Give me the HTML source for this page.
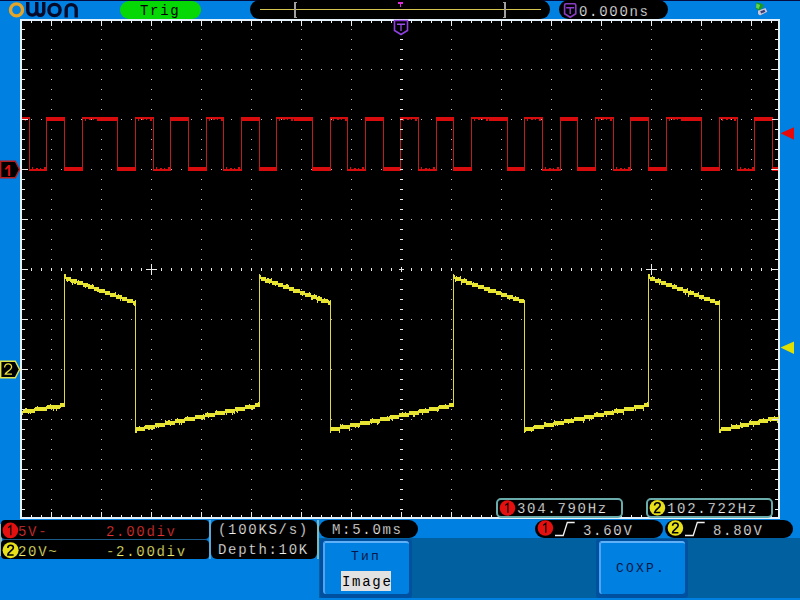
<!DOCTYPE html>
<html><head><meta charset="utf-8"><style>
*{margin:0;padding:0;box-sizing:border-box}
html,body{width:800px;height:600px;overflow:hidden;background:#0080e0;font-family:"Liberation Mono",monospace}
.a{position:absolute}
.pill{position:absolute;background:#000;border-radius:9px}
.txt{position:absolute;font-family:"Liberation Mono",monospace;font-size:14px;letter-spacing:1.7px;line-height:18px;color:#f0f0f0;white-space:pre;-webkit-text-stroke:0.25px #000}
</style></head><body>
<svg class="a" style="left:0;top:0" width="800" height="600" shape-rendering="crispEdges">
<rect x="20" y="19" width="760" height="500" fill="#e4f0fa"/>
<rect x="22" y="21" width="756" height="496" fill="#000"/>
<path d="M51 29h1v1h-1zM51 39h1v1h-1zM51 49h1v1h-1zM51 59h1v1h-1zM51 69h1v1h-1zM51 79h1v1h-1zM51 89h1v1h-1zM51 99h1v1h-1zM51 109h1v1h-1zM51 119h1v1h-1zM51 129h1v1h-1zM51 139h1v1h-1zM51 149h1v1h-1zM51 159h1v1h-1zM51 169h1v1h-1zM51 179h1v1h-1zM51 189h1v1h-1zM51 199h1v1h-1zM51 209h1v1h-1zM51 219h1v1h-1zM51 229h1v1h-1zM51 239h1v1h-1zM51 249h1v1h-1zM51 259h1v1h-1zM51 269h1v1h-1zM51 279h1v1h-1zM51 289h1v1h-1zM51 299h1v1h-1zM51 309h1v1h-1zM51 319h1v1h-1zM51 329h1v1h-1zM51 339h1v1h-1zM51 349h1v1h-1zM51 359h1v1h-1zM51 369h1v1h-1zM51 379h1v1h-1zM51 389h1v1h-1zM51 399h1v1h-1zM51 409h1v1h-1zM51 419h1v1h-1zM51 429h1v1h-1zM51 439h1v1h-1zM51 449h1v1h-1zM51 459h1v1h-1zM51 469h1v1h-1zM51 479h1v1h-1zM51 489h1v1h-1zM51 499h1v1h-1zM51 509h1v1h-1zM101 29h1v1h-1zM101 39h1v1h-1zM101 49h1v1h-1zM101 59h1v1h-1zM101 69h1v1h-1zM101 79h1v1h-1zM101 89h1v1h-1zM101 99h1v1h-1zM101 109h1v1h-1zM101 119h1v1h-1zM101 129h1v1h-1zM101 139h1v1h-1zM101 149h1v1h-1zM101 159h1v1h-1zM101 169h1v1h-1zM101 179h1v1h-1zM101 189h1v1h-1zM101 199h1v1h-1zM101 209h1v1h-1zM101 219h1v1h-1zM101 229h1v1h-1zM101 239h1v1h-1zM101 249h1v1h-1zM101 259h1v1h-1zM101 269h1v1h-1zM101 279h1v1h-1zM101 289h1v1h-1zM101 299h1v1h-1zM101 309h1v1h-1zM101 319h1v1h-1zM101 329h1v1h-1zM101 339h1v1h-1zM101 349h1v1h-1zM101 359h1v1h-1zM101 369h1v1h-1zM101 379h1v1h-1zM101 389h1v1h-1zM101 399h1v1h-1zM101 409h1v1h-1zM101 419h1v1h-1zM101 429h1v1h-1zM101 439h1v1h-1zM101 449h1v1h-1zM101 459h1v1h-1zM101 469h1v1h-1zM101 479h1v1h-1zM101 489h1v1h-1zM101 499h1v1h-1zM101 509h1v1h-1zM151 29h1v1h-1zM151 39h1v1h-1zM151 49h1v1h-1zM151 59h1v1h-1zM151 69h1v1h-1zM151 79h1v1h-1zM151 89h1v1h-1zM151 99h1v1h-1zM151 109h1v1h-1zM151 119h1v1h-1zM151 129h1v1h-1zM151 139h1v1h-1zM151 149h1v1h-1zM151 159h1v1h-1zM151 169h1v1h-1zM151 179h1v1h-1zM151 189h1v1h-1zM151 199h1v1h-1zM151 209h1v1h-1zM151 219h1v1h-1zM151 229h1v1h-1zM151 239h1v1h-1zM151 249h1v1h-1zM151 259h1v1h-1zM151 269h1v1h-1zM151 279h1v1h-1zM151 289h1v1h-1zM151 299h1v1h-1zM151 309h1v1h-1zM151 319h1v1h-1zM151 329h1v1h-1zM151 339h1v1h-1zM151 349h1v1h-1zM151 359h1v1h-1zM151 369h1v1h-1zM151 379h1v1h-1zM151 389h1v1h-1zM151 399h1v1h-1zM151 409h1v1h-1zM151 419h1v1h-1zM151 429h1v1h-1zM151 439h1v1h-1zM151 449h1v1h-1zM151 459h1v1h-1zM151 469h1v1h-1zM151 479h1v1h-1zM151 489h1v1h-1zM151 499h1v1h-1zM151 509h1v1h-1zM201 29h1v1h-1zM201 39h1v1h-1zM201 49h1v1h-1zM201 59h1v1h-1zM201 69h1v1h-1zM201 79h1v1h-1zM201 89h1v1h-1zM201 99h1v1h-1zM201 109h1v1h-1zM201 119h1v1h-1zM201 129h1v1h-1zM201 139h1v1h-1zM201 149h1v1h-1zM201 159h1v1h-1zM201 169h1v1h-1zM201 179h1v1h-1zM201 189h1v1h-1zM201 199h1v1h-1zM201 209h1v1h-1zM201 219h1v1h-1zM201 229h1v1h-1zM201 239h1v1h-1zM201 249h1v1h-1zM201 259h1v1h-1zM201 269h1v1h-1zM201 279h1v1h-1zM201 289h1v1h-1zM201 299h1v1h-1zM201 309h1v1h-1zM201 319h1v1h-1zM201 329h1v1h-1zM201 339h1v1h-1zM201 349h1v1h-1zM201 359h1v1h-1zM201 369h1v1h-1zM201 379h1v1h-1zM201 389h1v1h-1zM201 399h1v1h-1zM201 409h1v1h-1zM201 419h1v1h-1zM201 429h1v1h-1zM201 439h1v1h-1zM201 449h1v1h-1zM201 459h1v1h-1zM201 469h1v1h-1zM201 479h1v1h-1zM201 489h1v1h-1zM201 499h1v1h-1zM201 509h1v1h-1zM251 29h1v1h-1zM251 39h1v1h-1zM251 49h1v1h-1zM251 59h1v1h-1zM251 69h1v1h-1zM251 79h1v1h-1zM251 89h1v1h-1zM251 99h1v1h-1zM251 109h1v1h-1zM251 119h1v1h-1zM251 129h1v1h-1zM251 139h1v1h-1zM251 149h1v1h-1zM251 159h1v1h-1zM251 169h1v1h-1zM251 179h1v1h-1zM251 189h1v1h-1zM251 199h1v1h-1zM251 209h1v1h-1zM251 219h1v1h-1zM251 229h1v1h-1zM251 239h1v1h-1zM251 249h1v1h-1zM251 259h1v1h-1zM251 269h1v1h-1zM251 279h1v1h-1zM251 289h1v1h-1zM251 299h1v1h-1zM251 309h1v1h-1zM251 319h1v1h-1zM251 329h1v1h-1zM251 339h1v1h-1zM251 349h1v1h-1zM251 359h1v1h-1zM251 369h1v1h-1zM251 379h1v1h-1zM251 389h1v1h-1zM251 399h1v1h-1zM251 409h1v1h-1zM251 419h1v1h-1zM251 429h1v1h-1zM251 439h1v1h-1zM251 449h1v1h-1zM251 459h1v1h-1zM251 469h1v1h-1zM251 479h1v1h-1zM251 489h1v1h-1zM251 499h1v1h-1zM251 509h1v1h-1zM301 29h1v1h-1zM301 39h1v1h-1zM301 49h1v1h-1zM301 59h1v1h-1zM301 69h1v1h-1zM301 79h1v1h-1zM301 89h1v1h-1zM301 99h1v1h-1zM301 109h1v1h-1zM301 119h1v1h-1zM301 129h1v1h-1zM301 139h1v1h-1zM301 149h1v1h-1zM301 159h1v1h-1zM301 169h1v1h-1zM301 179h1v1h-1zM301 189h1v1h-1zM301 199h1v1h-1zM301 209h1v1h-1zM301 219h1v1h-1zM301 229h1v1h-1zM301 239h1v1h-1zM301 249h1v1h-1zM301 259h1v1h-1zM301 269h1v1h-1zM301 279h1v1h-1zM301 289h1v1h-1zM301 299h1v1h-1zM301 309h1v1h-1zM301 319h1v1h-1zM301 329h1v1h-1zM301 339h1v1h-1zM301 349h1v1h-1zM301 359h1v1h-1zM301 369h1v1h-1zM301 379h1v1h-1zM301 389h1v1h-1zM301 399h1v1h-1zM301 409h1v1h-1zM301 419h1v1h-1zM301 429h1v1h-1zM301 439h1v1h-1zM301 449h1v1h-1zM301 459h1v1h-1zM301 469h1v1h-1zM301 479h1v1h-1zM301 489h1v1h-1zM301 499h1v1h-1zM301 509h1v1h-1zM351 29h1v1h-1zM351 39h1v1h-1zM351 49h1v1h-1zM351 59h1v1h-1zM351 69h1v1h-1zM351 79h1v1h-1zM351 89h1v1h-1zM351 99h1v1h-1zM351 109h1v1h-1zM351 119h1v1h-1zM351 129h1v1h-1zM351 139h1v1h-1zM351 149h1v1h-1zM351 159h1v1h-1zM351 169h1v1h-1zM351 179h1v1h-1zM351 189h1v1h-1zM351 199h1v1h-1zM351 209h1v1h-1zM351 219h1v1h-1zM351 229h1v1h-1zM351 239h1v1h-1zM351 249h1v1h-1zM351 259h1v1h-1zM351 269h1v1h-1zM351 279h1v1h-1zM351 289h1v1h-1zM351 299h1v1h-1zM351 309h1v1h-1zM351 319h1v1h-1zM351 329h1v1h-1zM351 339h1v1h-1zM351 349h1v1h-1zM351 359h1v1h-1zM351 369h1v1h-1zM351 379h1v1h-1zM351 389h1v1h-1zM351 399h1v1h-1zM351 409h1v1h-1zM351 419h1v1h-1zM351 429h1v1h-1zM351 439h1v1h-1zM351 449h1v1h-1zM351 459h1v1h-1zM351 469h1v1h-1zM351 479h1v1h-1zM351 489h1v1h-1zM351 499h1v1h-1zM351 509h1v1h-1zM451 29h1v1h-1zM451 39h1v1h-1zM451 49h1v1h-1zM451 59h1v1h-1zM451 69h1v1h-1zM451 79h1v1h-1zM451 89h1v1h-1zM451 99h1v1h-1zM451 109h1v1h-1zM451 119h1v1h-1zM451 129h1v1h-1zM451 139h1v1h-1zM451 149h1v1h-1zM451 159h1v1h-1zM451 169h1v1h-1zM451 179h1v1h-1zM451 189h1v1h-1zM451 199h1v1h-1zM451 209h1v1h-1zM451 219h1v1h-1zM451 229h1v1h-1zM451 239h1v1h-1zM451 249h1v1h-1zM451 259h1v1h-1zM451 269h1v1h-1zM451 279h1v1h-1zM451 289h1v1h-1zM451 299h1v1h-1zM451 309h1v1h-1zM451 319h1v1h-1zM451 329h1v1h-1zM451 339h1v1h-1zM451 349h1v1h-1zM451 359h1v1h-1zM451 369h1v1h-1zM451 379h1v1h-1zM451 389h1v1h-1zM451 399h1v1h-1zM451 409h1v1h-1zM451 419h1v1h-1zM451 429h1v1h-1zM451 439h1v1h-1zM451 449h1v1h-1zM451 459h1v1h-1zM451 469h1v1h-1zM451 479h1v1h-1zM451 489h1v1h-1zM451 499h1v1h-1zM451 509h1v1h-1zM501 29h1v1h-1zM501 39h1v1h-1zM501 49h1v1h-1zM501 59h1v1h-1zM501 69h1v1h-1zM501 79h1v1h-1zM501 89h1v1h-1zM501 99h1v1h-1zM501 109h1v1h-1zM501 119h1v1h-1zM501 129h1v1h-1zM501 139h1v1h-1zM501 149h1v1h-1zM501 159h1v1h-1zM501 169h1v1h-1zM501 179h1v1h-1zM501 189h1v1h-1zM501 199h1v1h-1zM501 209h1v1h-1zM501 219h1v1h-1zM501 229h1v1h-1zM501 239h1v1h-1zM501 249h1v1h-1zM501 259h1v1h-1zM501 269h1v1h-1zM501 279h1v1h-1zM501 289h1v1h-1zM501 299h1v1h-1zM501 309h1v1h-1zM501 319h1v1h-1zM501 329h1v1h-1zM501 339h1v1h-1zM501 349h1v1h-1zM501 359h1v1h-1zM501 369h1v1h-1zM501 379h1v1h-1zM501 389h1v1h-1zM501 399h1v1h-1zM501 409h1v1h-1zM501 419h1v1h-1zM501 429h1v1h-1zM501 439h1v1h-1zM501 449h1v1h-1zM501 459h1v1h-1zM501 469h1v1h-1zM501 479h1v1h-1zM501 489h1v1h-1zM501 499h1v1h-1zM501 509h1v1h-1zM551 29h1v1h-1zM551 39h1v1h-1zM551 49h1v1h-1zM551 59h1v1h-1zM551 69h1v1h-1zM551 79h1v1h-1zM551 89h1v1h-1zM551 99h1v1h-1zM551 109h1v1h-1zM551 119h1v1h-1zM551 129h1v1h-1zM551 139h1v1h-1zM551 149h1v1h-1zM551 159h1v1h-1zM551 169h1v1h-1zM551 179h1v1h-1zM551 189h1v1h-1zM551 199h1v1h-1zM551 209h1v1h-1zM551 219h1v1h-1zM551 229h1v1h-1zM551 239h1v1h-1zM551 249h1v1h-1zM551 259h1v1h-1zM551 269h1v1h-1zM551 279h1v1h-1zM551 289h1v1h-1zM551 299h1v1h-1zM551 309h1v1h-1zM551 319h1v1h-1zM551 329h1v1h-1zM551 339h1v1h-1zM551 349h1v1h-1zM551 359h1v1h-1zM551 369h1v1h-1zM551 379h1v1h-1zM551 389h1v1h-1zM551 399h1v1h-1zM551 409h1v1h-1zM551 419h1v1h-1zM551 429h1v1h-1zM551 439h1v1h-1zM551 449h1v1h-1zM551 459h1v1h-1zM551 469h1v1h-1zM551 479h1v1h-1zM551 489h1v1h-1zM551 499h1v1h-1zM551 509h1v1h-1zM601 29h1v1h-1zM601 39h1v1h-1zM601 49h1v1h-1zM601 59h1v1h-1zM601 69h1v1h-1zM601 79h1v1h-1zM601 89h1v1h-1zM601 99h1v1h-1zM601 109h1v1h-1zM601 119h1v1h-1zM601 129h1v1h-1zM601 139h1v1h-1zM601 149h1v1h-1zM601 159h1v1h-1zM601 169h1v1h-1zM601 179h1v1h-1zM601 189h1v1h-1zM601 199h1v1h-1zM601 209h1v1h-1zM601 219h1v1h-1zM601 229h1v1h-1zM601 239h1v1h-1zM601 249h1v1h-1zM601 259h1v1h-1zM601 269h1v1h-1zM601 279h1v1h-1zM601 289h1v1h-1zM601 299h1v1h-1zM601 309h1v1h-1zM601 319h1v1h-1zM601 329h1v1h-1zM601 339h1v1h-1zM601 349h1v1h-1zM601 359h1v1h-1zM601 369h1v1h-1zM601 379h1v1h-1zM601 389h1v1h-1zM601 399h1v1h-1zM601 409h1v1h-1zM601 419h1v1h-1zM601 429h1v1h-1zM601 439h1v1h-1zM601 449h1v1h-1zM601 459h1v1h-1zM601 469h1v1h-1zM601 479h1v1h-1zM601 489h1v1h-1zM601 499h1v1h-1zM601 509h1v1h-1zM651 29h1v1h-1zM651 39h1v1h-1zM651 49h1v1h-1zM651 59h1v1h-1zM651 69h1v1h-1zM651 79h1v1h-1zM651 89h1v1h-1zM651 99h1v1h-1zM651 109h1v1h-1zM651 119h1v1h-1zM651 129h1v1h-1zM651 139h1v1h-1zM651 149h1v1h-1zM651 159h1v1h-1zM651 169h1v1h-1zM651 179h1v1h-1zM651 189h1v1h-1zM651 199h1v1h-1zM651 209h1v1h-1zM651 219h1v1h-1zM651 229h1v1h-1zM651 239h1v1h-1zM651 249h1v1h-1zM651 259h1v1h-1zM651 269h1v1h-1zM651 279h1v1h-1zM651 289h1v1h-1zM651 299h1v1h-1zM651 309h1v1h-1zM651 319h1v1h-1zM651 329h1v1h-1zM651 339h1v1h-1zM651 349h1v1h-1zM651 359h1v1h-1zM651 369h1v1h-1zM651 379h1v1h-1zM651 389h1v1h-1zM651 399h1v1h-1zM651 409h1v1h-1zM651 419h1v1h-1zM651 429h1v1h-1zM651 439h1v1h-1zM651 449h1v1h-1zM651 459h1v1h-1zM651 469h1v1h-1zM651 479h1v1h-1zM651 489h1v1h-1zM651 499h1v1h-1zM651 509h1v1h-1zM701 29h1v1h-1zM701 39h1v1h-1zM701 49h1v1h-1zM701 59h1v1h-1zM701 69h1v1h-1zM701 79h1v1h-1zM701 89h1v1h-1zM701 99h1v1h-1zM701 109h1v1h-1zM701 119h1v1h-1zM701 129h1v1h-1zM701 139h1v1h-1zM701 149h1v1h-1zM701 159h1v1h-1zM701 169h1v1h-1zM701 179h1v1h-1zM701 189h1v1h-1zM701 199h1v1h-1zM701 209h1v1h-1zM701 219h1v1h-1zM701 229h1v1h-1zM701 239h1v1h-1zM701 249h1v1h-1zM701 259h1v1h-1zM701 269h1v1h-1zM701 279h1v1h-1zM701 289h1v1h-1zM701 299h1v1h-1zM701 309h1v1h-1zM701 319h1v1h-1zM701 329h1v1h-1zM701 339h1v1h-1zM701 349h1v1h-1zM701 359h1v1h-1zM701 369h1v1h-1zM701 379h1v1h-1zM701 389h1v1h-1zM701 399h1v1h-1zM701 409h1v1h-1zM701 419h1v1h-1zM701 429h1v1h-1zM701 439h1v1h-1zM701 449h1v1h-1zM701 459h1v1h-1zM701 469h1v1h-1zM701 479h1v1h-1zM701 489h1v1h-1zM701 499h1v1h-1zM701 509h1v1h-1zM751 29h1v1h-1zM751 39h1v1h-1zM751 49h1v1h-1zM751 59h1v1h-1zM751 69h1v1h-1zM751 79h1v1h-1zM751 89h1v1h-1zM751 99h1v1h-1zM751 109h1v1h-1zM751 119h1v1h-1zM751 129h1v1h-1zM751 139h1v1h-1zM751 149h1v1h-1zM751 159h1v1h-1zM751 169h1v1h-1zM751 179h1v1h-1zM751 189h1v1h-1zM751 199h1v1h-1zM751 209h1v1h-1zM751 219h1v1h-1zM751 229h1v1h-1zM751 239h1v1h-1zM751 249h1v1h-1zM751 259h1v1h-1zM751 269h1v1h-1zM751 279h1v1h-1zM751 289h1v1h-1zM751 299h1v1h-1zM751 309h1v1h-1zM751 319h1v1h-1zM751 329h1v1h-1zM751 339h1v1h-1zM751 349h1v1h-1zM751 359h1v1h-1zM751 369h1v1h-1zM751 379h1v1h-1zM751 389h1v1h-1zM751 399h1v1h-1zM751 409h1v1h-1zM751 419h1v1h-1zM751 429h1v1h-1zM751 439h1v1h-1zM751 449h1v1h-1zM751 459h1v1h-1zM751 469h1v1h-1zM751 479h1v1h-1zM751 489h1v1h-1zM751 499h1v1h-1zM751 509h1v1h-1zM31 69h1v1h-1zM41 69h1v1h-1zM61 69h1v1h-1zM71 69h1v1h-1zM81 69h1v1h-1zM91 69h1v1h-1zM111 69h1v1h-1zM121 69h1v1h-1zM131 69h1v1h-1zM141 69h1v1h-1zM161 69h1v1h-1zM171 69h1v1h-1zM181 69h1v1h-1zM191 69h1v1h-1zM211 69h1v1h-1zM221 69h1v1h-1zM231 69h1v1h-1zM241 69h1v1h-1zM261 69h1v1h-1zM271 69h1v1h-1zM281 69h1v1h-1zM291 69h1v1h-1zM311 69h1v1h-1zM321 69h1v1h-1zM331 69h1v1h-1zM341 69h1v1h-1zM361 69h1v1h-1zM371 69h1v1h-1zM381 69h1v1h-1zM391 69h1v1h-1zM411 69h1v1h-1zM421 69h1v1h-1zM431 69h1v1h-1zM441 69h1v1h-1zM461 69h1v1h-1zM471 69h1v1h-1zM481 69h1v1h-1zM491 69h1v1h-1zM511 69h1v1h-1zM521 69h1v1h-1zM531 69h1v1h-1zM541 69h1v1h-1zM561 69h1v1h-1zM571 69h1v1h-1zM581 69h1v1h-1zM591 69h1v1h-1zM611 69h1v1h-1zM621 69h1v1h-1zM631 69h1v1h-1zM641 69h1v1h-1zM661 69h1v1h-1zM671 69h1v1h-1zM681 69h1v1h-1zM691 69h1v1h-1zM711 69h1v1h-1zM721 69h1v1h-1zM731 69h1v1h-1zM741 69h1v1h-1zM761 69h1v1h-1zM771 69h1v1h-1zM31 119h1v1h-1zM41 119h1v1h-1zM61 119h1v1h-1zM71 119h1v1h-1zM81 119h1v1h-1zM91 119h1v1h-1zM111 119h1v1h-1zM121 119h1v1h-1zM131 119h1v1h-1zM141 119h1v1h-1zM161 119h1v1h-1zM171 119h1v1h-1zM181 119h1v1h-1zM191 119h1v1h-1zM211 119h1v1h-1zM221 119h1v1h-1zM231 119h1v1h-1zM241 119h1v1h-1zM261 119h1v1h-1zM271 119h1v1h-1zM281 119h1v1h-1zM291 119h1v1h-1zM311 119h1v1h-1zM321 119h1v1h-1zM331 119h1v1h-1zM341 119h1v1h-1zM361 119h1v1h-1zM371 119h1v1h-1zM381 119h1v1h-1zM391 119h1v1h-1zM411 119h1v1h-1zM421 119h1v1h-1zM431 119h1v1h-1zM441 119h1v1h-1zM461 119h1v1h-1zM471 119h1v1h-1zM481 119h1v1h-1zM491 119h1v1h-1zM511 119h1v1h-1zM521 119h1v1h-1zM531 119h1v1h-1zM541 119h1v1h-1zM561 119h1v1h-1zM571 119h1v1h-1zM581 119h1v1h-1zM591 119h1v1h-1zM611 119h1v1h-1zM621 119h1v1h-1zM631 119h1v1h-1zM641 119h1v1h-1zM661 119h1v1h-1zM671 119h1v1h-1zM681 119h1v1h-1zM691 119h1v1h-1zM711 119h1v1h-1zM721 119h1v1h-1zM731 119h1v1h-1zM741 119h1v1h-1zM761 119h1v1h-1zM771 119h1v1h-1zM31 169h1v1h-1zM41 169h1v1h-1zM61 169h1v1h-1zM71 169h1v1h-1zM81 169h1v1h-1zM91 169h1v1h-1zM111 169h1v1h-1zM121 169h1v1h-1zM131 169h1v1h-1zM141 169h1v1h-1zM161 169h1v1h-1zM171 169h1v1h-1zM181 169h1v1h-1zM191 169h1v1h-1zM211 169h1v1h-1zM221 169h1v1h-1zM231 169h1v1h-1zM241 169h1v1h-1zM261 169h1v1h-1zM271 169h1v1h-1zM281 169h1v1h-1zM291 169h1v1h-1zM311 169h1v1h-1zM321 169h1v1h-1zM331 169h1v1h-1zM341 169h1v1h-1zM361 169h1v1h-1zM371 169h1v1h-1zM381 169h1v1h-1zM391 169h1v1h-1zM411 169h1v1h-1zM421 169h1v1h-1zM431 169h1v1h-1zM441 169h1v1h-1zM461 169h1v1h-1zM471 169h1v1h-1zM481 169h1v1h-1zM491 169h1v1h-1zM511 169h1v1h-1zM521 169h1v1h-1zM531 169h1v1h-1zM541 169h1v1h-1zM561 169h1v1h-1zM571 169h1v1h-1zM581 169h1v1h-1zM591 169h1v1h-1zM611 169h1v1h-1zM621 169h1v1h-1zM631 169h1v1h-1zM641 169h1v1h-1zM661 169h1v1h-1zM671 169h1v1h-1zM681 169h1v1h-1zM691 169h1v1h-1zM711 169h1v1h-1zM721 169h1v1h-1zM731 169h1v1h-1zM741 169h1v1h-1zM761 169h1v1h-1zM771 169h1v1h-1zM31 219h1v1h-1zM41 219h1v1h-1zM61 219h1v1h-1zM71 219h1v1h-1zM81 219h1v1h-1zM91 219h1v1h-1zM111 219h1v1h-1zM121 219h1v1h-1zM131 219h1v1h-1zM141 219h1v1h-1zM161 219h1v1h-1zM171 219h1v1h-1zM181 219h1v1h-1zM191 219h1v1h-1zM211 219h1v1h-1zM221 219h1v1h-1zM231 219h1v1h-1zM241 219h1v1h-1zM261 219h1v1h-1zM271 219h1v1h-1zM281 219h1v1h-1zM291 219h1v1h-1zM311 219h1v1h-1zM321 219h1v1h-1zM331 219h1v1h-1zM341 219h1v1h-1zM361 219h1v1h-1zM371 219h1v1h-1zM381 219h1v1h-1zM391 219h1v1h-1zM411 219h1v1h-1zM421 219h1v1h-1zM431 219h1v1h-1zM441 219h1v1h-1zM461 219h1v1h-1zM471 219h1v1h-1zM481 219h1v1h-1zM491 219h1v1h-1zM511 219h1v1h-1zM521 219h1v1h-1zM531 219h1v1h-1zM541 219h1v1h-1zM561 219h1v1h-1zM571 219h1v1h-1zM581 219h1v1h-1zM591 219h1v1h-1zM611 219h1v1h-1zM621 219h1v1h-1zM631 219h1v1h-1zM641 219h1v1h-1zM661 219h1v1h-1zM671 219h1v1h-1zM681 219h1v1h-1zM691 219h1v1h-1zM711 219h1v1h-1zM721 219h1v1h-1zM731 219h1v1h-1zM741 219h1v1h-1zM761 219h1v1h-1zM771 219h1v1h-1zM31 319h1v1h-1zM41 319h1v1h-1zM61 319h1v1h-1zM71 319h1v1h-1zM81 319h1v1h-1zM91 319h1v1h-1zM111 319h1v1h-1zM121 319h1v1h-1zM131 319h1v1h-1zM141 319h1v1h-1zM161 319h1v1h-1zM171 319h1v1h-1zM181 319h1v1h-1zM191 319h1v1h-1zM211 319h1v1h-1zM221 319h1v1h-1zM231 319h1v1h-1zM241 319h1v1h-1zM261 319h1v1h-1zM271 319h1v1h-1zM281 319h1v1h-1zM291 319h1v1h-1zM311 319h1v1h-1zM321 319h1v1h-1zM331 319h1v1h-1zM341 319h1v1h-1zM361 319h1v1h-1zM371 319h1v1h-1zM381 319h1v1h-1zM391 319h1v1h-1zM411 319h1v1h-1zM421 319h1v1h-1zM431 319h1v1h-1zM441 319h1v1h-1zM461 319h1v1h-1zM471 319h1v1h-1zM481 319h1v1h-1zM491 319h1v1h-1zM511 319h1v1h-1zM521 319h1v1h-1zM531 319h1v1h-1zM541 319h1v1h-1zM561 319h1v1h-1zM571 319h1v1h-1zM581 319h1v1h-1zM591 319h1v1h-1zM611 319h1v1h-1zM621 319h1v1h-1zM631 319h1v1h-1zM641 319h1v1h-1zM661 319h1v1h-1zM671 319h1v1h-1zM681 319h1v1h-1zM691 319h1v1h-1zM711 319h1v1h-1zM721 319h1v1h-1zM731 319h1v1h-1zM741 319h1v1h-1zM761 319h1v1h-1zM771 319h1v1h-1zM31 369h1v1h-1zM41 369h1v1h-1zM61 369h1v1h-1zM71 369h1v1h-1zM81 369h1v1h-1zM91 369h1v1h-1zM111 369h1v1h-1zM121 369h1v1h-1zM131 369h1v1h-1zM141 369h1v1h-1zM161 369h1v1h-1zM171 369h1v1h-1zM181 369h1v1h-1zM191 369h1v1h-1zM211 369h1v1h-1zM221 369h1v1h-1zM231 369h1v1h-1zM241 369h1v1h-1zM261 369h1v1h-1zM271 369h1v1h-1zM281 369h1v1h-1zM291 369h1v1h-1zM311 369h1v1h-1zM321 369h1v1h-1zM331 369h1v1h-1zM341 369h1v1h-1zM361 369h1v1h-1zM371 369h1v1h-1zM381 369h1v1h-1zM391 369h1v1h-1zM411 369h1v1h-1zM421 369h1v1h-1zM431 369h1v1h-1zM441 369h1v1h-1zM461 369h1v1h-1zM471 369h1v1h-1zM481 369h1v1h-1zM491 369h1v1h-1zM511 369h1v1h-1zM521 369h1v1h-1zM531 369h1v1h-1zM541 369h1v1h-1zM561 369h1v1h-1zM571 369h1v1h-1zM581 369h1v1h-1zM591 369h1v1h-1zM611 369h1v1h-1zM621 369h1v1h-1zM631 369h1v1h-1zM641 369h1v1h-1zM661 369h1v1h-1zM671 369h1v1h-1zM681 369h1v1h-1zM691 369h1v1h-1zM711 369h1v1h-1zM721 369h1v1h-1zM731 369h1v1h-1zM741 369h1v1h-1zM761 369h1v1h-1zM771 369h1v1h-1zM31 419h1v1h-1zM41 419h1v1h-1zM61 419h1v1h-1zM71 419h1v1h-1zM81 419h1v1h-1zM91 419h1v1h-1zM111 419h1v1h-1zM121 419h1v1h-1zM131 419h1v1h-1zM141 419h1v1h-1zM161 419h1v1h-1zM171 419h1v1h-1zM181 419h1v1h-1zM191 419h1v1h-1zM211 419h1v1h-1zM221 419h1v1h-1zM231 419h1v1h-1zM241 419h1v1h-1zM261 419h1v1h-1zM271 419h1v1h-1zM281 419h1v1h-1zM291 419h1v1h-1zM311 419h1v1h-1zM321 419h1v1h-1zM331 419h1v1h-1zM341 419h1v1h-1zM361 419h1v1h-1zM371 419h1v1h-1zM381 419h1v1h-1zM391 419h1v1h-1zM411 419h1v1h-1zM421 419h1v1h-1zM431 419h1v1h-1zM441 419h1v1h-1zM461 419h1v1h-1zM471 419h1v1h-1zM481 419h1v1h-1zM491 419h1v1h-1zM511 419h1v1h-1zM521 419h1v1h-1zM531 419h1v1h-1zM541 419h1v1h-1zM561 419h1v1h-1zM571 419h1v1h-1zM581 419h1v1h-1zM591 419h1v1h-1zM611 419h1v1h-1zM621 419h1v1h-1zM631 419h1v1h-1zM641 419h1v1h-1zM661 419h1v1h-1zM671 419h1v1h-1zM681 419h1v1h-1zM691 419h1v1h-1zM711 419h1v1h-1zM721 419h1v1h-1zM731 419h1v1h-1zM741 419h1v1h-1zM761 419h1v1h-1zM771 419h1v1h-1zM31 469h1v1h-1zM41 469h1v1h-1zM61 469h1v1h-1zM71 469h1v1h-1zM81 469h1v1h-1zM91 469h1v1h-1zM111 469h1v1h-1zM121 469h1v1h-1zM131 469h1v1h-1zM141 469h1v1h-1zM161 469h1v1h-1zM171 469h1v1h-1zM181 469h1v1h-1zM191 469h1v1h-1zM211 469h1v1h-1zM221 469h1v1h-1zM231 469h1v1h-1zM241 469h1v1h-1zM261 469h1v1h-1zM271 469h1v1h-1zM281 469h1v1h-1zM291 469h1v1h-1zM311 469h1v1h-1zM321 469h1v1h-1zM331 469h1v1h-1zM341 469h1v1h-1zM361 469h1v1h-1zM371 469h1v1h-1zM381 469h1v1h-1zM391 469h1v1h-1zM411 469h1v1h-1zM421 469h1v1h-1zM431 469h1v1h-1zM441 469h1v1h-1zM461 469h1v1h-1zM471 469h1v1h-1zM481 469h1v1h-1zM491 469h1v1h-1zM511 469h1v1h-1zM521 469h1v1h-1zM531 469h1v1h-1zM541 469h1v1h-1zM561 469h1v1h-1zM571 469h1v1h-1zM581 469h1v1h-1zM591 469h1v1h-1zM611 469h1v1h-1zM621 469h1v1h-1zM631 469h1v1h-1zM641 469h1v1h-1zM661 469h1v1h-1zM671 469h1v1h-1zM681 469h1v1h-1zM691 469h1v1h-1zM711 469h1v1h-1zM721 469h1v1h-1zM731 469h1v1h-1zM741 469h1v1h-1zM761 469h1v1h-1zM771 469h1v1h-1z" fill="#bcbcbc"/>
<path d="M29 117h1v54h-1zM46 117h1v54h-1zM64 117h1v54h-1zM82 117h1v54h-1zM117 117h1v54h-1zM135 117h1v54h-1zM153 117h1v54h-1zM170 117h1v54h-1zM188 117h1v54h-1zM206 117h1v54h-1zM223 117h1v54h-1zM241 117h1v54h-1zM259 117h1v54h-1zM276 117h1v54h-1zM312 117h1v54h-1zM330 117h1v54h-1zM347 117h1v54h-1zM365 117h1v54h-1zM383 117h1v54h-1zM400 117h1v54h-1zM418 117h1v54h-1zM436 117h1v54h-1zM453 117h1v54h-1zM471 117h1v54h-1zM507 117h1v54h-1zM524 117h1v54h-1zM542 117h1v54h-1zM560 117h1v54h-1zM577 117h1v54h-1zM595 117h1v54h-1zM613 117h1v54h-1zM630 117h1v54h-1zM648 117h1v54h-1zM666 117h1v54h-1zM701 117h1v54h-1zM719 117h1v54h-1zM737 117h1v54h-1zM754 117h1v54h-1zM772 117h1v54h-1z" fill="#b82020"/><path d="M22 117h8v2h-8zM25 119h1v2h-1zM29 169h18v2h-18zM32 167h1v2h-1zM36 168h2v1h-2zM40 168h1v1h-1zM44 167h2v2h-2zM46 117h19v4h-19zM64 167h19v4h-19zM82 117h18v2h-18zM85 119h1v2h-1zM89 119h2v1h-2zM93 119h1v1h-1zM97 119h2v2h-2zM99 117h19v4h-19zM117 167h19v4h-19zM135 117h19v2h-19zM138 119h1v2h-1zM142 119h2v1h-2zM146 119h1v1h-1zM150 119h2v2h-2zM153 169h18v2h-18zM156 167h1v2h-1zM160 168h2v1h-2zM164 168h1v1h-1zM168 167h2v2h-2zM170 117h19v4h-19zM188 167h19v4h-19zM206 117h18v2h-18zM209 119h1v2h-1zM213 119h2v1h-2zM217 119h1v1h-1zM221 119h2v2h-2zM223 169h19v2h-19zM226 167h1v2h-1zM230 168h2v1h-2zM234 168h1v1h-1zM238 167h2v2h-2zM241 117h19v4h-19zM259 167h18v4h-18zM276 117h19v2h-19zM279 119h1v2h-1zM283 119h2v1h-2zM287 119h1v1h-1zM291 119h2v2h-2zM294 117h19v4h-19zM312 167h19v4h-19zM330 117h18v2h-18zM333 119h1v2h-1zM337 119h2v1h-2zM341 119h1v1h-1zM345 119h2v2h-2zM347 169h19v2h-19zM350 167h1v2h-1zM354 168h2v1h-2zM358 168h1v1h-1zM362 167h2v2h-2zM365 117h19v4h-19zM383 167h18v4h-18zM400 117h19v2h-19zM403 119h1v2h-1zM407 119h2v1h-2zM411 119h1v1h-1zM415 119h2v2h-2zM418 169h19v2h-19zM421 167h1v2h-1zM425 168h2v1h-2zM429 168h1v1h-1zM433 167h2v2h-2zM436 117h18v4h-18zM453 167h19v4h-19zM471 117h19v2h-19zM474 119h1v2h-1zM478 119h2v1h-2zM482 119h1v1h-1zM486 119h2v2h-2zM489 117h19v4h-19zM507 167h18v4h-18zM524 117h19v2h-19zM527 119h1v2h-1zM531 119h2v1h-2zM535 119h1v1h-1zM539 119h2v2h-2zM542 169h19v2h-19zM545 167h1v2h-1zM549 168h2v1h-2zM553 168h1v1h-1zM557 167h2v2h-2zM560 117h18v4h-18zM577 167h19v4h-19zM595 117h19v2h-19zM598 119h1v2h-1zM602 119h2v1h-2zM606 119h1v1h-1zM610 119h2v2h-2zM613 169h18v2h-18zM616 167h1v2h-1zM620 168h2v1h-2zM624 168h1v1h-1zM628 167h2v2h-2zM630 117h19v4h-19zM648 167h19v4h-19zM666 117h18v2h-18zM669 119h1v2h-1zM673 119h2v1h-2zM677 119h1v1h-1zM681 119h2v2h-2zM683 117h19v4h-19zM701 167h19v4h-19zM719 117h19v2h-19zM722 119h1v2h-1zM726 119h2v1h-2zM730 119h1v1h-1zM734 119h2v2h-2zM737 169h18v2h-18zM740 167h1v2h-1zM744 168h2v1h-2zM748 168h1v1h-1zM752 167h2v2h-2zM754 117h19v4h-19zM772 167h6v4h-6z" fill="#d80c0c"/>
<path d="M64 274h1v132h-1zM259 274h1v132h-1zM453 274h1v132h-1zM648 274h1v132h-1zM135 300h1v133h-1zM330 300h1v133h-1zM524 300h1v133h-1zM719 300h1v133h-1z" fill="#dcd84a"/><path d="M64 275h1v4h-1zM65 275h1v4h-1zM65 274h1v1h-1zM66 277h1v4h-1zM67 277h1v4h-1zM67 281h1v1h-1zM68 277h1v4h-1zM69 277h1v4h-1zM70 277h1v4h-1zM70 281h1v1h-1zM71 279h1v4h-1zM72 279h1v4h-1zM72 283h1v2h-1zM73 279h1v4h-1zM74 279h1v4h-1zM74 283h1v1h-1zM75 279h1v4h-1zM75 283h1v1h-1zM76 279h1v4h-1zM77 281h1v4h-1zM78 281h1v4h-1zM78 280h1v1h-1zM79 281h1v4h-1zM80 281h1v4h-1zM81 281h1v4h-1zM82 281h1v4h-1zM83 283h1v4h-1zM84 283h1v4h-1zM85 283h1v4h-1zM85 287h1v1h-1zM86 283h1v4h-1zM87 283h1v4h-1zM88 285h1v4h-1zM88 284h1v1h-1zM89 285h1v4h-1zM89 284h1v1h-1zM90 285h1v4h-1zM91 285h1v4h-1zM92 285h1v4h-1zM92 284h1v1h-1zM93 285h1v4h-1zM94 287h1v4h-1zM95 287h1v4h-1zM96 287h1v4h-1zM97 287h1v4h-1zM97 291h1v1h-1zM98 287h1v4h-1zM98 291h1v1h-1zM99 289h1v4h-1zM100 289h1v4h-1zM101 289h1v4h-1zM102 289h1v4h-1zM103 289h1v4h-1zM104 289h1v4h-1zM105 291h1v4h-1zM106 291h1v4h-1zM107 291h1v4h-1zM108 291h1v4h-1zM109 291h1v4h-1zM110 293h1v4h-1zM111 293h1v4h-1zM112 293h1v4h-1zM113 293h1v4h-1zM114 293h1v4h-1zM115 293h1v4h-1zM115 292h1v1h-1zM116 295h1v4h-1zM117 295h1v4h-1zM118 295h1v4h-1zM118 294h1v1h-1zM119 295h1v4h-1zM120 295h1v4h-1zM120 299h1v2h-1zM121 295h1v4h-1zM122 297h1v4h-1zM123 297h1v4h-1zM124 297h1v4h-1zM125 297h1v4h-1zM126 297h1v4h-1zM127 299h1v4h-1zM128 299h1v4h-1zM129 299h1v4h-1zM130 299h1v4h-1zM131 299h1v4h-1zM132 299h1v4h-1zM133 301h1v4h-1zM134 301h1v4h-1zM134 305h1v1h-1zM135 301h1v4h-1zM259 275h1v4h-1zM260 275h1v4h-1zM261 277h1v4h-1zM262 277h1v4h-1zM263 277h1v4h-1zM264 277h1v4h-1zM265 277h1v4h-1zM265 281h1v2h-1zM266 279h1v4h-1zM267 279h1v4h-1zM267 278h1v1h-1zM268 279h1v4h-1zM268 278h1v1h-1zM269 279h1v4h-1zM269 283h1v1h-1zM270 279h1v4h-1zM271 279h1v4h-1zM271 278h1v1h-1zM272 281h1v4h-1zM273 281h1v4h-1zM274 281h1v4h-1zM275 281h1v4h-1zM275 285h1v1h-1zM276 281h1v4h-1zM277 281h1v4h-1zM278 283h1v4h-1zM279 283h1v4h-1zM280 283h1v4h-1zM281 283h1v4h-1zM282 283h1v4h-1zM283 285h1v4h-1zM284 285h1v4h-1zM285 285h1v4h-1zM286 285h1v4h-1zM286 284h1v1h-1zM287 285h1v4h-1zM287 284h1v1h-1zM288 285h1v4h-1zM289 287h1v4h-1zM290 287h1v4h-1zM291 287h1v4h-1zM292 287h1v4h-1zM293 287h1v4h-1zM293 291h1v2h-1zM294 289h1v4h-1zM295 289h1v4h-1zM296 289h1v4h-1zM297 289h1v4h-1zM298 289h1v4h-1zM299 289h1v4h-1zM300 291h1v4h-1zM301 291h1v4h-1zM302 291h1v4h-1zM302 295h1v1h-1zM303 291h1v4h-1zM304 291h1v4h-1zM305 293h1v4h-1zM306 293h1v4h-1zM307 293h1v4h-1zM308 293h1v4h-1zM309 293h1v4h-1zM309 292h1v1h-1zM310 293h1v4h-1zM311 295h1v4h-1zM311 299h1v1h-1zM312 295h1v4h-1zM312 299h1v1h-1zM313 295h1v4h-1zM314 295h1v4h-1zM314 294h1v1h-1zM315 295h1v4h-1zM316 295h1v4h-1zM316 299h1v1h-1zM317 297h1v4h-1zM317 301h1v2h-1zM318 297h1v4h-1zM318 296h1v1h-1zM319 297h1v4h-1zM319 296h1v1h-1zM320 297h1v4h-1zM321 297h1v4h-1zM321 301h1v2h-1zM322 299h1v4h-1zM323 299h1v4h-1zM324 299h1v4h-1zM324 298h1v1h-1zM325 299h1v4h-1zM326 299h1v4h-1zM327 299h1v4h-1zM328 301h1v4h-1zM328 300h1v1h-1zM329 301h1v4h-1zM330 301h1v4h-1zM453 275h1v4h-1zM454 275h1v4h-1zM455 277h1v4h-1zM455 281h1v1h-1zM456 277h1v4h-1zM456 276h1v1h-1zM457 277h1v4h-1zM458 277h1v4h-1zM459 277h1v4h-1zM460 277h1v4h-1zM460 276h1v1h-1zM461 279h1v4h-1zM461 283h1v2h-1zM462 279h1v4h-1zM463 279h1v4h-1zM464 279h1v4h-1zM464 278h1v1h-1zM465 279h1v4h-1zM466 279h1v4h-1zM466 283h1v2h-1zM467 281h1v4h-1zM468 281h1v4h-1zM469 281h1v4h-1zM470 281h1v4h-1zM471 281h1v4h-1zM472 283h1v4h-1zM473 283h1v4h-1zM473 282h1v1h-1zM474 283h1v4h-1zM475 283h1v4h-1zM476 283h1v4h-1zM477 283h1v4h-1zM478 285h1v4h-1zM479 285h1v4h-1zM480 285h1v4h-1zM481 285h1v4h-1zM482 285h1v4h-1zM483 285h1v4h-1zM484 287h1v4h-1zM485 287h1v4h-1zM486 287h1v4h-1zM487 287h1v4h-1zM488 287h1v4h-1zM488 291h1v2h-1zM489 287h1v4h-1zM489 291h1v2h-1zM490 289h1v4h-1zM491 289h1v4h-1zM492 289h1v4h-1zM493 289h1v4h-1zM494 289h1v4h-1zM495 289h1v4h-1zM496 291h1v4h-1zM497 291h1v4h-1zM498 291h1v4h-1zM499 291h1v4h-1zM500 291h1v4h-1zM501 293h1v4h-1zM501 292h1v1h-1zM502 293h1v4h-1zM503 293h1v4h-1zM504 293h1v4h-1zM505 293h1v4h-1zM506 293h1v4h-1zM507 295h1v4h-1zM508 295h1v4h-1zM509 295h1v4h-1zM509 299h1v1h-1zM510 295h1v4h-1zM511 295h1v4h-1zM512 295h1v4h-1zM513 297h1v4h-1zM514 297h1v4h-1zM515 297h1v4h-1zM515 296h1v1h-1zM516 297h1v4h-1zM517 297h1v4h-1zM518 297h1v4h-1zM519 299h1v4h-1zM520 299h1v4h-1zM521 299h1v4h-1zM522 299h1v4h-1zM523 299h1v4h-1zM524 301h1v4h-1zM524 300h1v1h-1zM648 275h1v4h-1zM648 274h1v1h-1zM649 275h1v4h-1zM649 274h1v1h-1zM650 277h1v4h-1zM651 277h1v4h-1zM652 277h1v4h-1zM652 276h1v1h-1zM653 277h1v4h-1zM654 277h1v4h-1zM655 279h1v4h-1zM656 279h1v4h-1zM657 279h1v4h-1zM658 279h1v4h-1zM658 278h1v1h-1zM659 279h1v4h-1zM659 283h1v2h-1zM660 279h1v4h-1zM661 281h1v4h-1zM662 281h1v4h-1zM663 281h1v4h-1zM664 281h1v4h-1zM665 281h1v4h-1zM666 283h1v4h-1zM667 283h1v4h-1zM668 283h1v4h-1zM669 283h1v4h-1zM670 283h1v4h-1zM671 283h1v4h-1zM672 285h1v4h-1zM673 285h1v4h-1zM674 285h1v4h-1zM674 284h1v1h-1zM675 285h1v4h-1zM676 285h1v4h-1zM677 287h1v4h-1zM678 287h1v4h-1zM679 287h1v4h-1zM680 287h1v4h-1zM681 287h1v4h-1zM682 287h1v4h-1zM683 289h1v4h-1zM684 289h1v4h-1zM685 289h1v4h-1zM685 293h1v2h-1zM686 289h1v4h-1zM687 289h1v4h-1zM687 288h1v1h-1zM688 291h1v4h-1zM688 295h1v2h-1zM689 291h1v4h-1zM690 291h1v4h-1zM690 290h1v1h-1zM691 291h1v4h-1zM692 291h1v4h-1zM693 291h1v4h-1zM694 293h1v4h-1zM695 293h1v4h-1zM696 293h1v4h-1zM697 293h1v4h-1zM698 293h1v4h-1zM698 292h1v1h-1zM699 295h1v4h-1zM700 295h1v4h-1zM701 295h1v4h-1zM702 295h1v4h-1zM703 295h1v4h-1zM704 297h1v4h-1zM705 297h1v4h-1zM706 297h1v4h-1zM707 297h1v4h-1zM708 297h1v4h-1zM709 297h1v4h-1zM710 299h1v4h-1zM711 299h1v4h-1zM712 299h1v4h-1zM713 299h1v4h-1zM714 299h1v4h-1zM715 301h1v4h-1zM716 301h1v4h-1zM717 301h1v4h-1zM718 301h1v4h-1zM719 301h1v4h-1zM22 411h1v4h-1zM23 409h1v4h-1zM24 409h1v4h-1zM25 409h1v4h-1zM25 408h1v1h-1zM26 409h1v4h-1zM26 408h1v1h-1zM27 409h1v4h-1zM28 409h1v4h-1zM28 413h1v1h-1zM29 409h1v4h-1zM30 409h1v4h-1zM30 413h1v1h-1zM31 409h1v4h-1zM32 409h1v4h-1zM33 409h1v4h-1zM34 409h1v4h-1zM34 408h1v1h-1zM35 407h1v4h-1zM36 407h1v4h-1zM37 407h1v4h-1zM37 406h1v1h-1zM38 407h1v4h-1zM39 407h1v4h-1zM40 407h1v4h-1zM41 407h1v4h-1zM42 407h1v4h-1zM43 407h1v4h-1zM44 407h1v4h-1zM45 407h1v4h-1zM46 407h1v4h-1zM46 406h1v1h-1zM47 405h1v4h-1zM48 405h1v4h-1zM49 405h1v4h-1zM50 405h1v4h-1zM50 404h1v1h-1zM51 405h1v4h-1zM52 405h1v4h-1zM53 405h1v4h-1zM53 409h1v2h-1zM54 405h1v4h-1zM55 405h1v4h-1zM56 405h1v4h-1zM56 409h1v2h-1zM57 405h1v4h-1zM58 405h1v4h-1zM59 405h1v4h-1zM60 403h1v4h-1zM60 407h1v1h-1zM61 403h1v4h-1zM62 403h1v4h-1zM63 403h1v4h-1zM64 403h1v4h-1zM64 402h1v1h-1zM135 429h1v4h-1zM136 427h1v4h-1zM136 431h1v2h-1zM137 427h1v4h-1zM138 427h1v4h-1zM139 427h1v4h-1zM139 426h1v1h-1zM140 427h1v4h-1zM141 427h1v4h-1zM142 427h1v4h-1zM143 427h1v4h-1zM144 427h1v4h-1zM144 426h1v1h-1zM145 425h1v4h-1zM146 425h1v4h-1zM147 425h1v4h-1zM148 425h1v4h-1zM148 429h1v1h-1zM149 425h1v4h-1zM149 429h1v1h-1zM150 425h1v4h-1zM151 425h1v4h-1zM152 425h1v4h-1zM152 429h1v1h-1zM153 425h1v4h-1zM154 425h1v4h-1zM155 423h1v4h-1zM156 423h1v4h-1zM156 427h1v1h-1zM157 423h1v4h-1zM158 423h1v4h-1zM158 427h1v1h-1zM159 423h1v4h-1zM160 423h1v4h-1zM161 423h1v4h-1zM162 423h1v4h-1zM163 423h1v4h-1zM164 423h1v4h-1zM165 421h1v4h-1zM165 420h1v1h-1zM166 421h1v4h-1zM167 421h1v4h-1zM168 421h1v4h-1zM168 420h1v1h-1zM169 421h1v4h-1zM169 420h1v1h-1zM170 421h1v4h-1zM170 425h1v1h-1zM171 421h1v4h-1zM172 421h1v4h-1zM173 421h1v4h-1zM174 421h1v4h-1zM175 419h1v4h-1zM176 419h1v4h-1zM177 419h1v4h-1zM177 418h1v1h-1zM178 419h1v4h-1zM179 419h1v4h-1zM179 423h1v2h-1zM180 419h1v4h-1zM181 419h1v4h-1zM181 423h1v2h-1zM182 419h1v4h-1zM183 419h1v4h-1zM184 419h1v4h-1zM184 418h1v1h-1zM185 417h1v4h-1zM186 417h1v4h-1zM187 417h1v4h-1zM187 416h1v1h-1zM188 417h1v4h-1zM189 417h1v4h-1zM190 417h1v4h-1zM191 417h1v4h-1zM192 417h1v4h-1zM193 417h1v4h-1zM194 417h1v4h-1zM195 415h1v4h-1zM196 415h1v4h-1zM197 415h1v4h-1zM198 415h1v4h-1zM199 415h1v4h-1zM200 415h1v4h-1zM201 415h1v4h-1zM202 415h1v4h-1zM202 419h1v1h-1zM203 415h1v4h-1zM203 414h1v1h-1zM204 415h1v4h-1zM204 419h1v1h-1zM205 413h1v4h-1zM206 413h1v4h-1zM207 413h1v4h-1zM207 412h1v1h-1zM208 413h1v4h-1zM208 417h1v1h-1zM209 413h1v4h-1zM210 413h1v4h-1zM211 413h1v4h-1zM212 413h1v4h-1zM213 413h1v4h-1zM214 413h1v4h-1zM215 411h1v4h-1zM216 411h1v4h-1zM216 410h1v1h-1zM217 411h1v4h-1zM218 411h1v4h-1zM219 411h1v4h-1zM220 411h1v4h-1zM221 411h1v4h-1zM222 411h1v4h-1zM223 411h1v4h-1zM224 411h1v4h-1zM225 409h1v4h-1zM226 409h1v4h-1zM226 413h1v2h-1zM227 409h1v4h-1zM228 409h1v4h-1zM229 409h1v4h-1zM230 409h1v4h-1zM231 409h1v4h-1zM232 409h1v4h-1zM232 413h1v2h-1zM233 409h1v4h-1zM234 409h1v4h-1zM234 413h1v1h-1zM235 407h1v4h-1zM236 407h1v4h-1zM236 411h1v1h-1zM237 407h1v4h-1zM237 411h1v2h-1zM238 407h1v4h-1zM239 407h1v4h-1zM240 407h1v4h-1zM241 407h1v4h-1zM242 407h1v4h-1zM243 407h1v4h-1zM244 407h1v4h-1zM245 405h1v4h-1zM246 405h1v4h-1zM247 405h1v4h-1zM248 405h1v4h-1zM249 405h1v4h-1zM249 404h1v1h-1zM250 405h1v4h-1zM251 405h1v4h-1zM252 405h1v4h-1zM252 409h1v1h-1zM253 405h1v4h-1zM254 405h1v4h-1zM255 403h1v4h-1zM256 403h1v4h-1zM257 403h1v4h-1zM258 403h1v4h-1zM258 402h1v1h-1zM259 403h1v4h-1zM330 429h1v4h-1zM331 427h1v4h-1zM332 427h1v4h-1zM333 427h1v4h-1zM334 427h1v4h-1zM335 427h1v4h-1zM336 427h1v4h-1zM337 427h1v4h-1zM338 427h1v4h-1zM339 427h1v4h-1zM339 431h1v2h-1zM340 425h1v4h-1zM340 424h1v1h-1zM341 425h1v4h-1zM342 425h1v4h-1zM342 424h1v1h-1zM343 425h1v4h-1zM344 425h1v4h-1zM345 425h1v4h-1zM346 425h1v4h-1zM347 425h1v4h-1zM348 425h1v4h-1zM349 425h1v4h-1zM349 429h1v2h-1zM350 423h1v4h-1zM351 423h1v4h-1zM352 423h1v4h-1zM353 423h1v4h-1zM354 423h1v4h-1zM355 423h1v4h-1zM355 427h1v1h-1zM356 423h1v4h-1zM357 423h1v4h-1zM358 423h1v4h-1zM358 427h1v1h-1zM359 423h1v4h-1zM360 421h1v4h-1zM361 421h1v4h-1zM362 421h1v4h-1zM363 421h1v4h-1zM364 421h1v4h-1zM365 421h1v4h-1zM366 421h1v4h-1zM367 421h1v4h-1zM368 421h1v4h-1zM369 421h1v4h-1zM370 419h1v4h-1zM371 419h1v4h-1zM371 423h1v1h-1zM372 419h1v4h-1zM372 418h1v1h-1zM373 419h1v4h-1zM374 419h1v4h-1zM375 419h1v4h-1zM376 419h1v4h-1zM377 419h1v4h-1zM377 423h1v2h-1zM378 419h1v4h-1zM378 423h1v1h-1zM379 419h1v4h-1zM380 417h1v4h-1zM381 417h1v4h-1zM382 417h1v4h-1zM383 417h1v4h-1zM384 417h1v4h-1zM385 417h1v4h-1zM386 417h1v4h-1zM387 417h1v4h-1zM387 416h1v1h-1zM388 417h1v4h-1zM389 417h1v4h-1zM389 416h1v1h-1zM390 415h1v4h-1zM391 415h1v4h-1zM392 415h1v4h-1zM392 419h1v2h-1zM393 415h1v4h-1zM394 415h1v4h-1zM395 415h1v4h-1zM396 415h1v4h-1zM397 415h1v4h-1zM398 415h1v4h-1zM399 413h1v4h-1zM400 413h1v4h-1zM401 413h1v4h-1zM402 413h1v4h-1zM402 412h1v1h-1zM403 413h1v4h-1zM404 413h1v4h-1zM405 413h1v4h-1zM405 412h1v1h-1zM406 413h1v4h-1zM407 413h1v4h-1zM408 413h1v4h-1zM409 411h1v4h-1zM410 411h1v4h-1zM411 411h1v4h-1zM412 411h1v4h-1zM413 411h1v4h-1zM413 415h1v2h-1zM414 411h1v4h-1zM414 415h1v2h-1zM415 411h1v4h-1zM416 411h1v4h-1zM417 411h1v4h-1zM418 411h1v4h-1zM418 410h1v1h-1zM419 409h1v4h-1zM420 409h1v4h-1zM421 409h1v4h-1zM422 409h1v4h-1zM422 413h1v2h-1zM423 409h1v4h-1zM424 409h1v4h-1zM425 409h1v4h-1zM425 408h1v1h-1zM426 409h1v4h-1zM427 409h1v4h-1zM428 409h1v4h-1zM429 407h1v4h-1zM430 407h1v4h-1zM431 407h1v4h-1zM432 407h1v4h-1zM433 407h1v4h-1zM434 407h1v4h-1zM435 407h1v4h-1zM436 407h1v4h-1zM437 407h1v4h-1zM437 411h1v1h-1zM438 407h1v4h-1zM438 406h1v1h-1zM439 405h1v4h-1zM440 405h1v4h-1zM441 405h1v4h-1zM442 405h1v4h-1zM443 405h1v4h-1zM444 405h1v4h-1zM445 405h1v4h-1zM445 404h1v1h-1zM446 405h1v4h-1zM447 405h1v4h-1zM448 405h1v4h-1zM449 403h1v4h-1zM450 403h1v4h-1zM451 403h1v4h-1zM452 403h1v4h-1zM453 403h1v4h-1zM524 429h1v4h-1zM525 427h1v4h-1zM525 431h1v1h-1zM526 427h1v4h-1zM527 427h1v4h-1zM528 427h1v4h-1zM529 427h1v4h-1zM530 427h1v4h-1zM531 427h1v4h-1zM531 431h1v1h-1zM532 427h1v4h-1zM533 427h1v4h-1zM533 426h1v1h-1zM534 425h1v4h-1zM535 425h1v4h-1zM536 425h1v4h-1zM537 425h1v4h-1zM538 425h1v4h-1zM539 425h1v4h-1zM540 425h1v4h-1zM541 425h1v4h-1zM542 425h1v4h-1zM543 425h1v4h-1zM544 423h1v4h-1zM544 422h1v1h-1zM545 423h1v4h-1zM545 422h1v1h-1zM546 423h1v4h-1zM547 423h1v4h-1zM548 423h1v4h-1zM549 423h1v4h-1zM550 423h1v4h-1zM551 423h1v4h-1zM552 423h1v4h-1zM553 423h1v4h-1zM553 422h1v1h-1zM554 421h1v4h-1zM554 420h1v1h-1zM555 421h1v4h-1zM555 425h1v1h-1zM556 421h1v4h-1zM557 421h1v4h-1zM557 425h1v1h-1zM558 421h1v4h-1zM559 421h1v4h-1zM560 421h1v4h-1zM561 421h1v4h-1zM562 421h1v4h-1zM563 421h1v4h-1zM564 419h1v4h-1zM565 419h1v4h-1zM566 419h1v4h-1zM567 419h1v4h-1zM568 419h1v4h-1zM568 423h1v1h-1zM569 419h1v4h-1zM570 419h1v4h-1zM571 419h1v4h-1zM571 418h1v1h-1zM572 419h1v4h-1zM573 419h1v4h-1zM574 417h1v4h-1zM575 417h1v4h-1zM576 417h1v4h-1zM577 417h1v4h-1zM578 417h1v4h-1zM579 417h1v4h-1zM580 417h1v4h-1zM581 417h1v4h-1zM582 417h1v4h-1zM583 417h1v4h-1zM583 421h1v2h-1zM584 415h1v4h-1zM584 419h1v2h-1zM585 415h1v4h-1zM586 415h1v4h-1zM587 415h1v4h-1zM588 415h1v4h-1zM589 415h1v4h-1zM589 419h1v2h-1zM590 415h1v4h-1zM591 415h1v4h-1zM592 415h1v4h-1zM593 415h1v4h-1zM594 413h1v4h-1zM595 413h1v4h-1zM596 413h1v4h-1zM596 412h1v1h-1zM597 413h1v4h-1zM597 412h1v1h-1zM598 413h1v4h-1zM599 413h1v4h-1zM600 413h1v4h-1zM601 413h1v4h-1zM602 413h1v4h-1zM603 413h1v4h-1zM604 411h1v4h-1zM605 411h1v4h-1zM606 411h1v4h-1zM606 415h1v2h-1zM607 411h1v4h-1zM608 411h1v4h-1zM609 411h1v4h-1zM610 411h1v4h-1zM611 411h1v4h-1zM612 411h1v4h-1zM612 410h1v1h-1zM613 411h1v4h-1zM614 409h1v4h-1zM615 409h1v4h-1zM616 409h1v4h-1zM616 408h1v1h-1zM617 409h1v4h-1zM617 413h1v1h-1zM618 409h1v4h-1zM619 409h1v4h-1zM620 409h1v4h-1zM621 409h1v4h-1zM622 409h1v4h-1zM623 409h1v4h-1zM623 413h1v2h-1zM624 407h1v4h-1zM625 407h1v4h-1zM626 407h1v4h-1zM627 407h1v4h-1zM628 407h1v4h-1zM629 407h1v4h-1zM630 407h1v4h-1zM631 407h1v4h-1zM632 407h1v4h-1zM633 407h1v4h-1zM634 405h1v4h-1zM635 405h1v4h-1zM635 409h1v2h-1zM636 405h1v4h-1zM637 405h1v4h-1zM638 405h1v4h-1zM639 405h1v4h-1zM640 405h1v4h-1zM641 405h1v4h-1zM642 405h1v4h-1zM643 405h1v4h-1zM643 409h1v2h-1zM644 403h1v4h-1zM645 403h1v4h-1zM646 403h1v4h-1zM647 403h1v4h-1zM647 402h1v1h-1zM648 403h1v4h-1zM719 429h1v4h-1zM720 429h1v4h-1zM721 427h1v4h-1zM722 427h1v4h-1zM723 427h1v4h-1zM724 427h1v4h-1zM725 427h1v4h-1zM726 427h1v4h-1zM727 427h1v4h-1zM728 427h1v4h-1zM729 427h1v4h-1zM730 427h1v4h-1zM731 425h1v4h-1zM731 424h1v1h-1zM732 425h1v4h-1zM733 425h1v4h-1zM734 425h1v4h-1zM735 425h1v4h-1zM736 425h1v4h-1zM736 424h1v1h-1zM737 425h1v4h-1zM738 425h1v4h-1zM739 425h1v4h-1zM740 423h1v4h-1zM740 422h1v1h-1zM741 423h1v4h-1zM741 427h1v1h-1zM742 423h1v4h-1zM742 427h1v1h-1zM743 423h1v4h-1zM744 423h1v4h-1zM745 423h1v4h-1zM746 423h1v4h-1zM747 423h1v4h-1zM748 423h1v4h-1zM749 421h1v4h-1zM750 421h1v4h-1zM750 420h1v1h-1zM751 421h1v4h-1zM752 421h1v4h-1zM753 421h1v4h-1zM753 425h1v2h-1zM754 421h1v4h-1zM755 421h1v4h-1zM756 421h1v4h-1zM757 421h1v4h-1zM758 421h1v4h-1zM758 420h1v1h-1zM759 419h1v4h-1zM759 423h1v2h-1zM760 419h1v4h-1zM761 419h1v4h-1zM762 419h1v4h-1zM763 419h1v4h-1zM763 418h1v1h-1zM764 419h1v4h-1zM765 419h1v4h-1zM766 419h1v4h-1zM767 419h1v4h-1zM768 417h1v4h-1zM769 417h1v4h-1zM770 417h1v4h-1zM770 421h1v1h-1zM771 417h1v4h-1zM772 417h1v4h-1zM773 417h1v4h-1zM774 417h1v4h-1zM774 416h1v1h-1zM775 417h1v4h-1zM776 417h1v4h-1zM777 417h1v4h-1zM777 421h1v2h-1zM778 415h1v4h-1z" fill="#e8e432"/>
<path d="M31 21h1v2h-1zM31 515h1v2h-1zM41 21h1v2h-1zM41 515h1v2h-1zM51 21h1v5h-1zM51 512h1v5h-1zM61 21h1v2h-1zM61 515h1v2h-1zM71 21h1v2h-1zM71 515h1v2h-1zM81 21h1v2h-1zM81 515h1v2h-1zM91 21h1v2h-1zM91 515h1v2h-1zM101 21h1v5h-1zM101 512h1v5h-1zM111 21h1v2h-1zM111 515h1v2h-1zM121 21h1v2h-1zM121 515h1v2h-1zM131 21h1v2h-1zM131 515h1v2h-1zM141 21h1v2h-1zM141 515h1v2h-1zM151 21h1v5h-1zM151 512h1v5h-1zM161 21h1v2h-1zM161 515h1v2h-1zM171 21h1v2h-1zM171 515h1v2h-1zM181 21h1v2h-1zM181 515h1v2h-1zM191 21h1v2h-1zM191 515h1v2h-1zM201 21h1v5h-1zM201 512h1v5h-1zM211 21h1v2h-1zM211 515h1v2h-1zM221 21h1v2h-1zM221 515h1v2h-1zM231 21h1v2h-1zM231 515h1v2h-1zM241 21h1v2h-1zM241 515h1v2h-1zM251 21h1v5h-1zM251 512h1v5h-1zM261 21h1v2h-1zM261 515h1v2h-1zM271 21h1v2h-1zM271 515h1v2h-1zM281 21h1v2h-1zM281 515h1v2h-1zM291 21h1v2h-1zM291 515h1v2h-1zM301 21h1v5h-1zM301 512h1v5h-1zM311 21h1v2h-1zM311 515h1v2h-1zM321 21h1v2h-1zM321 515h1v2h-1zM331 21h1v2h-1zM331 515h1v2h-1zM341 21h1v2h-1zM341 515h1v2h-1zM351 21h1v5h-1zM351 512h1v5h-1zM361 21h1v2h-1zM361 515h1v2h-1zM371 21h1v2h-1zM371 515h1v2h-1zM381 21h1v2h-1zM381 515h1v2h-1zM391 21h1v2h-1zM391 515h1v2h-1zM401 21h1v5h-1zM401 512h1v5h-1zM411 21h1v2h-1zM411 515h1v2h-1zM421 21h1v2h-1zM421 515h1v2h-1zM431 21h1v2h-1zM431 515h1v2h-1zM441 21h1v2h-1zM441 515h1v2h-1zM451 21h1v5h-1zM451 512h1v5h-1zM461 21h1v2h-1zM461 515h1v2h-1zM471 21h1v2h-1zM471 515h1v2h-1zM481 21h1v2h-1zM481 515h1v2h-1zM491 21h1v2h-1zM491 515h1v2h-1zM501 21h1v5h-1zM501 512h1v5h-1zM511 21h1v2h-1zM511 515h1v2h-1zM521 21h1v2h-1zM521 515h1v2h-1zM531 21h1v2h-1zM531 515h1v2h-1zM541 21h1v2h-1zM541 515h1v2h-1zM551 21h1v5h-1zM551 512h1v5h-1zM561 21h1v2h-1zM561 515h1v2h-1zM571 21h1v2h-1zM571 515h1v2h-1zM581 21h1v2h-1zM581 515h1v2h-1zM591 21h1v2h-1zM591 515h1v2h-1zM601 21h1v5h-1zM601 512h1v5h-1zM611 21h1v2h-1zM611 515h1v2h-1zM621 21h1v2h-1zM621 515h1v2h-1zM631 21h1v2h-1zM631 515h1v2h-1zM641 21h1v2h-1zM641 515h1v2h-1zM651 21h1v5h-1zM651 512h1v5h-1zM661 21h1v2h-1zM661 515h1v2h-1zM671 21h1v2h-1zM671 515h1v2h-1zM681 21h1v2h-1zM681 515h1v2h-1zM691 21h1v2h-1zM691 515h1v2h-1zM701 21h1v5h-1zM701 512h1v5h-1zM711 21h1v2h-1zM711 515h1v2h-1zM721 21h1v2h-1zM721 515h1v2h-1zM731 21h1v2h-1zM731 515h1v2h-1zM741 21h1v2h-1zM741 515h1v2h-1zM751 21h1v5h-1zM751 512h1v5h-1zM761 21h1v2h-1zM761 515h1v2h-1zM771 21h1v2h-1zM771 515h1v2h-1zM22 29h3v1h-3zM775 29h3v1h-3zM22 39h3v1h-3zM775 39h3v1h-3zM22 49h3v1h-3zM775 49h3v1h-3zM22 59h3v1h-3zM775 59h3v1h-3zM22 69h6v1h-6zM772 69h6v1h-6zM22 79h3v1h-3zM775 79h3v1h-3zM22 89h3v1h-3zM775 89h3v1h-3zM22 99h3v1h-3zM775 99h3v1h-3zM22 109h3v1h-3zM775 109h3v1h-3zM22 119h6v1h-6zM772 119h6v1h-6zM22 129h3v1h-3zM775 129h3v1h-3zM22 139h3v1h-3zM775 139h3v1h-3zM22 149h3v1h-3zM775 149h3v1h-3zM22 159h3v1h-3zM775 159h3v1h-3zM22 169h6v1h-6zM772 169h6v1h-6zM22 179h3v1h-3zM775 179h3v1h-3zM22 189h3v1h-3zM775 189h3v1h-3zM22 199h3v1h-3zM775 199h3v1h-3zM22 209h3v1h-3zM775 209h3v1h-3zM22 219h6v1h-6zM772 219h6v1h-6zM22 229h3v1h-3zM775 229h3v1h-3zM22 239h3v1h-3zM775 239h3v1h-3zM22 249h3v1h-3zM775 249h3v1h-3zM22 259h3v1h-3zM775 259h3v1h-3zM22 269h6v1h-6zM772 269h6v1h-6zM22 279h3v1h-3zM775 279h3v1h-3zM22 289h3v1h-3zM775 289h3v1h-3zM22 299h3v1h-3zM775 299h3v1h-3zM22 309h3v1h-3zM775 309h3v1h-3zM22 319h6v1h-6zM772 319h6v1h-6zM22 329h3v1h-3zM775 329h3v1h-3zM22 339h3v1h-3zM775 339h3v1h-3zM22 349h3v1h-3zM775 349h3v1h-3zM22 359h3v1h-3zM775 359h3v1h-3zM22 369h6v1h-6zM772 369h6v1h-6zM22 379h3v1h-3zM775 379h3v1h-3zM22 389h3v1h-3zM775 389h3v1h-3zM22 399h3v1h-3zM775 399h3v1h-3zM22 409h3v1h-3zM775 409h3v1h-3zM22 419h6v1h-6zM772 419h6v1h-6zM22 429h3v1h-3zM775 429h3v1h-3zM22 439h3v1h-3zM775 439h3v1h-3zM22 449h3v1h-3zM775 449h3v1h-3zM22 459h3v1h-3zM775 459h3v1h-3zM22 469h6v1h-6zM772 469h6v1h-6zM22 479h3v1h-3zM775 479h3v1h-3zM22 489h3v1h-3zM775 489h3v1h-3zM22 499h3v1h-3zM775 499h3v1h-3zM22 509h3v1h-3zM775 509h3v1h-3zM400 29h3v1h-3zM400 39h3v1h-3zM400 49h3v1h-3zM400 59h3v1h-3zM400 69h3v1h-3zM400 79h3v1h-3zM400 89h3v1h-3zM400 99h3v1h-3zM400 109h3v1h-3zM400 119h3v1h-3zM400 129h3v1h-3zM400 139h3v1h-3zM400 149h3v1h-3zM400 159h3v1h-3zM400 169h3v1h-3zM400 179h3v1h-3zM400 189h3v1h-3zM400 199h3v1h-3zM400 209h3v1h-3zM400 219h3v1h-3zM400 229h3v1h-3zM400 239h3v1h-3zM400 249h3v1h-3zM400 259h3v1h-3zM400 279h3v1h-3zM400 289h3v1h-3zM400 299h3v1h-3zM400 309h3v1h-3zM400 319h3v1h-3zM400 329h3v1h-3zM400 339h3v1h-3zM400 349h3v1h-3zM400 359h3v1h-3zM400 369h3v1h-3zM400 379h3v1h-3zM400 389h3v1h-3zM400 399h3v1h-3zM400 409h3v1h-3zM400 419h3v1h-3zM400 429h3v1h-3zM400 439h3v1h-3zM400 449h3v1h-3zM400 459h3v1h-3zM400 469h3v1h-3zM400 479h3v1h-3zM400 489h3v1h-3zM400 499h3v1h-3zM400 509h3v1h-3zM31 268h1v3h-1zM41 268h1v3h-1zM51 268h1v3h-1zM61 268h1v3h-1zM71 268h1v3h-1zM81 268h1v3h-1zM91 268h1v3h-1zM101 268h1v3h-1zM111 268h1v3h-1zM121 268h1v3h-1zM131 268h1v3h-1zM141 268h1v3h-1zM151 268h1v3h-1zM161 268h1v3h-1zM171 268h1v3h-1zM181 268h1v3h-1zM191 268h1v3h-1zM201 268h1v3h-1zM211 268h1v3h-1zM221 268h1v3h-1zM231 268h1v3h-1zM241 268h1v3h-1zM251 268h1v3h-1zM261 268h1v3h-1zM271 268h1v3h-1zM281 268h1v3h-1zM291 268h1v3h-1zM301 268h1v3h-1zM311 268h1v3h-1zM321 268h1v3h-1zM331 268h1v3h-1zM341 268h1v3h-1zM351 268h1v3h-1zM361 268h1v3h-1zM371 268h1v3h-1zM381 268h1v3h-1zM391 268h1v3h-1zM411 268h1v3h-1zM421 268h1v3h-1zM431 268h1v3h-1zM441 268h1v3h-1zM451 268h1v3h-1zM461 268h1v3h-1zM471 268h1v3h-1zM481 268h1v3h-1zM491 268h1v3h-1zM501 268h1v3h-1zM511 268h1v3h-1zM521 268h1v3h-1zM531 268h1v3h-1zM541 268h1v3h-1zM551 268h1v3h-1zM561 268h1v3h-1zM571 268h1v3h-1zM581 268h1v3h-1zM591 268h1v3h-1zM601 268h1v3h-1zM611 268h1v3h-1zM621 268h1v3h-1zM631 268h1v3h-1zM641 268h1v3h-1zM651 268h1v3h-1zM661 268h1v3h-1zM671 268h1v3h-1zM681 268h1v3h-1zM691 268h1v3h-1zM701 268h1v3h-1zM711 268h1v3h-1zM721 268h1v3h-1zM731 268h1v3h-1zM741 268h1v3h-1zM751 268h1v3h-1zM761 268h1v3h-1zM771 268h1v3h-1zM146 269h11v1h-11zM151 264h1v11h-1zM646 269h11v1h-11zM651 264h1v11h-1zM399 269h5v1h-5zM401 267h1v5h-1z" fill="#ececec"/>
</svg>
<div class="a" style="left:0;top:0;width:800px;height:1px;background:#040c40"></div>
<svg class="a" style="left:0;top:0" width="100" height="20">
<circle cx="16.5" cy="9.9" r="6" fill="none" stroke="#e6a526" stroke-width="3.4"/>
<path d="M27.75 2v8.6a4.5 4.5 0 0 0 9 0V2M36.75 10.6v1.2a3.5 3.5 0 0 0 7 0V2" fill="none" stroke="#050a28" stroke-width="3.4"/>
<circle cx="54.5" cy="10" r="5.6" fill="none" stroke="#050a28" stroke-width="3.4"/>
<path d="M66.2 17.5V9.6a5 5 0 0 1 10 0v7.9" fill="none" stroke="#050a28" stroke-width="3.4"/>
</svg>
<div class="a" style="left:120px;top:1px;width:81px;height:18px;border-radius:9px;background:#06d806"></div>
<div class="txt" style="left:140px;top:2px;color:#000;-webkit-text-stroke:0">Trig</div>
<div class="pill" style="left:250px;top:0;width:300px;height:19px;border-radius:9.5px"></div>
<svg class="a" style="left:250px;top:0" width="300" height="20" shape-rendering="crispEdges">
<rect x="10" y="9" width="281" height="1" fill="#d4c450"/>
<path d="M44 2h3v1h-1v14h1v1h-3z" fill="#a0a0a0"/>
<path d="M253 2h3v16h-3v-1h1V3h-1z" fill="#a0a0a0"/>
<path d="M148 2h5v2h-2v3h-1V4h-2z" fill="#dc2cdc"/>
</svg>
<div class="pill" style="left:559px;top:0;width:109px;height:19px;border-radius:9.5px"></div>
<svg class="a" style="left:562px;top:1px" width="17" height="18">
<path d="M2.6 4.2q0-1.4 1.4-1.4h8.4q1.4 0 1.4 1.4v8.6l-5.6 3.4l-5.6-3.4z" fill="#000" stroke="#8a3cc4" stroke-width="1.6"/>
<path d="M4.2 6h8v1.4h-3.3v5.6h-1.4v-5.6h-3.3z" fill="#9040d0"/>
</svg>
<div class="txt" style="left:579px;top:3px">0.000ns</div>
<svg class="a" style="left:748px;top:0" width="24" height="18">
<path d="M9.6 10.3L17.6 7.8l2.2 4L12 15.9l-2.4-1.9z" fill="#0a60b0" opacity="0.6"/>
<path d="M10 10.5L17.5 8l1.9 3.8L12 15.5l-2-1.5z" fill="#c8c8da"/><path d="M12.2 11.2l4.2-1.4l1 2l-4.2 1.7z" fill="#3c3c78"/>
<path d="M8.5 2.2L14.5 4q1.6 1.2 0.3 3.2L11.2 10.4L7.6 8.4z" fill="#1c9a1c"/><path d="M8.6 3.6L12.2 5l-1.6 4L7.9 7.6z" fill="#62d452"/>
</svg>
<svg class="a" style="left:393px;top:19px" width="16" height="17">
<path d="M1.5 1.5h13v10l-6.5 4l-6.5-4z" fill="#000" stroke="#9040e0" stroke-width="1.6"/>
<path d="M4 4.6h8v1.3h-3.4v6.1h-1.2v-6.1h-3.4z" fill="#a050f0"/>
</svg>
<svg class="a" style="left:0;top:160px" width="21" height="20">
<path d="M0.7 1.2h14.6l4.2 8.3l-4.2 8.3h-14.6z" fill="#000" stroke="#b81c1c" stroke-width="1.4"/>
<path d="M8.2 5h2.05v11h-2.05v-8l-2.3 2.1l-0.9-1.3z" fill="#e41010"/>
</svg>
<svg class="a" style="left:0;top:360px" width="21" height="20">
<path d="M0.7 1.2h14.6l4.2 8.3l-4.2 8.3h-14.6z" fill="#000" stroke="#e4e448" stroke-width="1.4"/>
<path d="M4.6 7.6c0-2.6 1.8-3.8 3.6-3.8s3.4 1.2 3.4 3.2c0 3-5.8 5-6.4 7.2h6.8" fill="none" stroke="#e8e040" stroke-width="1.3"/>
</svg>
<svg class="a" style="left:780px;top:126px" width="16" height="15"><path d="M0.5 7.2L14 1.2v12.6z" fill="#e80808"/></svg>
<svg class="a" style="left:780px;top:341px" width="16" height="14"><path d="M0.5 6.6L14 0.6v12.4z" fill="#e0e000"/></svg>
<div class="a" style="left:496px;top:498px;width:127px;height:20px;border:2px solid #6aacac;border-radius:5px;background:#000"></div>
<div class="a" style="left:646px;top:498px;width:127px;height:20px;border:2px solid #6aacac;border-radius:5px;background:#000"></div>
<svg class="a" style="left:490px;top:495px" width="190" height="25"><circle cx="17.5" cy="13" r="7.8" fill="#e41010"/><path d="M15.3 10.4l2.6-2.2v9.6" fill="none" stroke="#000" stroke-width="1.2"/><circle cx="167.4" cy="12.75" r="7.8" fill="#e8e018"/><path d="M164.6 10.55c0-1.8 1.2-2.8 2.8-2.8s2.8 1 2.8 2.6c0 2.4-5.6 4.2-5.6 7.2h5.8" fill="none" stroke="#000" stroke-width="1.6"/></svg>
<div class="txt" style="left:517px;top:500px">304.790Hz</div>
<div class="txt" style="left:667px;top:500px">102.722Hz</div>
<div class="a" style="left:0;top:524px;width:2px;height:32px;background:#8cb8c0"></div>
<div class="a" style="left:1px;top:520px;width:208px;height:19px;border-radius:4px;background:#000"></div>
<div class="a" style="left:1px;top:540px;width:208px;height:19px;border-radius:4px;background:#000"></div>
<div class="a" style="left:3px;top:539px;width:204px;height:1px;background:#1a5a8a"></div>
<svg class="a" style="left:0;top:515px" width="30" height="50"><circle cx="10.4" cy="15.4" r="7.8" fill="#e41010"/><path d="M8.2 12.8l2.6-2.2v9.6" fill="none" stroke="#000" stroke-width="1.2"/><circle cx="10.6" cy="35.2" r="8" fill="#e8e018"/><path d="M7.8 33.0c0-1.8 1.2-2.8 2.8-2.8s2.8 1 2.8 2.6c0 2.4-5.6 4.2-5.6 7.2h5.8" fill="none" stroke="#000" stroke-width="1.6"/></svg>
<div class="txt" style="left:18px;top:523px;color:#e43434">5V-</div>
<div class="txt" style="left:18px;top:543px;color:#f0f070">20V~</div>
<div class="txt" style="left:106px;top:523px;color:#e43434">2.00div</div>
<div class="txt" style="left:106px;top:543px;color:#f0f070">-2.00div</div>
<div class="a" style="left:209px;top:520px;width:2px;height:39px;background:#58a8d8"></div>
<div class="a" style="left:211px;top:520px;width:106px;height:39px;border-radius:6px;background:#000"></div>
<div class="txt" style="left:218px;top:521px">(100KS/s)</div>
<div class="txt" style="left:218px;top:541px">Depth:10K</div>
<div class="a" style="left:317px;top:520px;width:2px;height:39px;background:#80b8b8"></div>
<div class="a" style="left:319px;top:538px;width:481px;height:60px;background:#0060a0"></div>
<div class="pill" style="left:319px;top:520px;width:99px;height:18px"></div>
<div class="txt" style="left:332px;top:521px">M:5.0ms</div>
<div class="pill" style="left:535px;top:520px;width:128px;height:18px"></div>
<div class="pill" style="left:665px;top:520px;width:128px;height:18px"></div>
<svg class="a" style="left:530px;top:515px" width="200" height="25"><circle cx="15.4" cy="13" r="7.8" fill="#e41010"/><path d="M13.2 10.4l2.6-2.2v9.6" fill="none" stroke="#000" stroke-width="1.2"/><circle cx="145.4" cy="13" r="7.8" fill="#e8e018"/><path d="M142.6 10.8c0-1.8 1.2-2.8 2.8-2.8s2.8 1 2.8 2.6c0 2.4-5.6 4.2-5.6 7.2h5.8" fill="none" stroke="#000" stroke-width="1.6"/></svg>
<svg class="a" style="left:554px;top:521px" width="22" height="16"><path d="M1 14.5h8.2l4.1-13h7.4" fill="none" stroke="#f0f0f0" stroke-width="1.3"/></svg>
<svg class="a" style="left:684px;top:521px" width="22" height="16"><path d="M1 14.5h8.2l4.1-13h7.4" fill="none" stroke="#f0f0f0" stroke-width="1.3"/></svg>
<div class="txt" style="left:583px;top:522px">3.60V</div>
<div class="txt" style="left:713px;top:522px">8.80V</div>
<div class="a" style="left:320px;top:539px;width:92px;height:59px;border-radius:3px;background:#0050a0"></div>
<div class="a" style="left:323px;top:541px;width:86px;height:53px;border-radius:3px;background:#0080e0;border-top:2px solid #60b0f8;border-left:2px solid #50a4f0"></div>
<div class="a" style="left:596px;top:539px;width:92px;height:59px;border-radius:3px;background:#0050a0"></div>
<div class="a" style="left:599px;top:541px;width:86px;height:53px;border-radius:3px;background:#0080e0;border-top:2px solid #60b0f8;border-left:2px solid #50a4f0"></div>
<div class="a" style="left:341px;top:571px;width:50px;height:20px;background:#e2e2e2"></div>
<div class="a" style="left:351px;top:549px;font-family:&quot;Liberation Mono&quot;;font-size:13px;letter-spacing:2.2px;line-height:16px;color:#071848;white-space:pre">Тип</div>
<div class="txt" style="left:342px;top:573px;color:#000;-webkit-text-stroke:0">Image</div>
<div class="a" style="left:616px;top:561px;font-family:&quot;Liberation Mono&quot;;font-size:13px;letter-spacing:2.2px;line-height:16px;color:#071848;white-space:pre">СОХР.</div>
</body></html>
